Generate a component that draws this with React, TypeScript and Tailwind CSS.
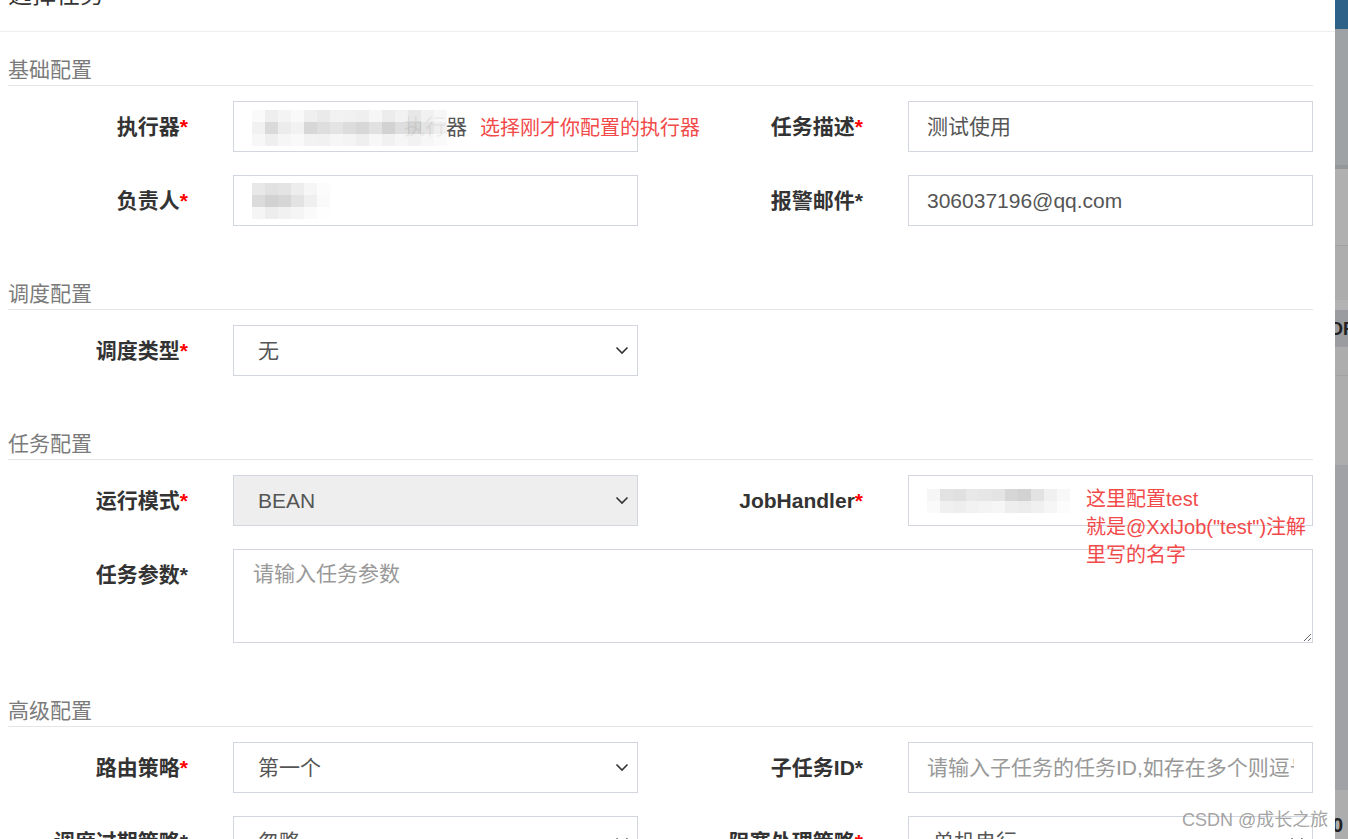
import type { ReactNode } from "react";

const FONT = "font-['Liberation_Sans','Noto_Sans_CJK_SC',sans-serif]";

function Chevron() {
  return (
    <svg width="14" height="9" viewBox="0 0 14 9" className="shrink-0">
      <polyline points="1.5,1.5 7,7 12.5,1.5" fill="none" stroke="#333" strokeWidth="1.6" />
    </svg>
  );
}

// pixelated blur used to hide private values
function Mosaic({ rows }: { rows: number[][] }) {
  return (
    <div className="flex flex-col">
      {rows.map((r, i) => (
        <div key={i} className="flex">
          {r.map((g, j) => (
            <div
              key={j}
              className="h-[12px] w-[13px]"
              style={{ backgroundColor: `rgb(${g},${g},${g})` }}
            />
          ))}
        </div>
      ))}
    </div>
  );
}

function Label({ text, red = true, w, top }: { text: string; red?: boolean; w: string; top?: boolean }) {
  return (
    <div
      className={`${w} shrink-0 text-right text-[21px] font-bold text-[#333] ${top ? "self-start pt-[10px]" : ""}`}
    >
      {text}
      <span className={red ? "text-[#ff0000]" : "text-[#333]"}>*</span>
    </div>
  );
}

function Box({ children, gray, select }: { children?: ReactNode; gray?: boolean; select?: boolean }) {
  return (
    <div
      className={`flex h-[51px] w-[405px] shrink-0 items-center justify-between overflow-hidden border border-[#d2d6de] ${
        gray ? "bg-[#eeeeee]" : "bg-white"
      } ${select ? "pl-[24px] pr-[8px]" : "px-[18px]"} text-[21px] text-[#555]`}
    >
      <div className="flex min-w-0 flex-1 items-center overflow-hidden">{children}</div>
      {select && <Chevron />}
    </div>
  );
}

function Row({ children }: { children: ReactNode }) {
  return <div className="relative flex items-center">{children}</div>;
}

function Section({ title, children }: { title: string; children: ReactNode }) {
  return (
    <div>
      <div className="flex h-[54px] items-end border-b border-[#e5e5e5] pb-[2px] text-[21px] leading-[26px] text-[#7b7b7b]">
        {title}
      </div>
      <div className="flex flex-col gap-[23px] pt-[15px] pb-[30px]">{children}</div>
    </div>
  );
}

const L = "w-[180px]";
const R = "w-[225px]";

export default function App() {
  return (
    <div className={`flex h-[839px] w-[1348px] overflow-hidden bg-white ${FONT}`}>
      <div className="relative w-[1335px] shrink-0 bg-white">
        <div className="h-[32px] overflow-hidden border-b border-[#eeeeee]">
          <div className="-mt-[20px] pl-[8px] text-[24px] leading-[30px] text-[#333]">选择任务</div>
        </div>

        <div className="pl-[8px] pr-[22px]">
          <Section title="基础配置">
            <Row>
              <Label text="执行器" w={L} />
              <div className="ml-[45px]">
                <Box>
                  <div className="relative flex h-[49px] w-full items-center">
                    <span className="ml-[152px] whitespace-nowrap text-[#555]">
                      <span className="opacity-40">执行</span>器
                    </span>
                    <div className="absolute left-[0px] top-[8px] opacity-80">
                      <Mosaic
                        rows={[
                          [250, 235, 242, 248, 236, 230, 240, 238, 236, 244, 232, 240, 226, 238, 246],
                          [238, 210, 232, 240, 206, 214, 222, 212, 206, 218, 200, 214, 204, 222, 236],
                          [246, 236, 244, 248, 240, 238, 244, 242, 236, 246, 238, 244, 240, 246, 250],
                        ]}
                      />
                    </div>
                  </div>
                </Box>
              </div>
              <div className="absolute left-[472px] top-[12px] text-[20px] text-[#f24a4a]">
                选择刚才你配置的执行器
              </div>
              <Label text="任务描述" w={R} />
              <div className="ml-[45px]">
                <Box>
                  <span>测试使用</span>
                </Box>
              </div>
            </Row>
            <Row>
              <Label text="负责人" w={L} />
              <div className="ml-[45px]">
                <Box>
                  <div className="opacity-90">
                    <Mosaic
                      rows={[
                        [230, 222, 226, 236, 246, 252],
                        [216, 206, 210, 224, 238, 250],
                        [244, 236, 240, 244, 250, 254],
                      ]}
                    />
                  </div>
                </Box>
              </div>
              <Label text="报警邮件" red={false} w={R} />
              <div className="ml-[45px]">
                <Box>
                  <span>306037196@qq.com</span>
                </Box>
              </div>
            </Row>
          </Section>

          <Section title="调度配置">
            <Row>
              <Label text="调度类型" w={L} />
              <div className="ml-[45px]">
                <Box select>
                  <span>无</span>
                </Box>
              </div>
            </Row>
          </Section>

          <Section title="任务配置">
            <Row>
              <Label text="运行模式" w={L} />
              <div className="ml-[45px]">
                <Box select gray>
                  <span>BEAN</span>
                </Box>
              </div>
              <Label text="JobHandler" w={R} />
              <div className="ml-[45px]">
                <Box>
                  <Mosaic
                    rows={[
                      [246, 226, 224, 232, 230, 228, 214, 210, 226, 240, 248],
                      [250, 240, 238, 242, 244, 246, 238, 236, 240, 246, 252],
                    ]}
                  />
                </Box>
              </div>
            </Row>
            <Row>
              <Label text="任务参数" red={false} w={L} top />
              <textarea
                placeholder="请输入任务参数"
                className="ml-[45px] h-[94px] w-[1080px] self-start border border-[#d2d6de] px-[19px] py-[8px] text-[21px] text-[#555] outline-none placeholder:text-[#999]"
              />
              <div className="absolute left-[1078px] top-[-64px] text-[20px] leading-[28px] text-[#f24a4a]">
                <div>这里配置test</div>
                <div>就是@XxlJob("test")注解</div>
                <div>里写的名字</div>
              </div>
            </Row>
          </Section>

          <Section title="高级配置">
            <Row>
              <Label text="路由策略" w={L} />
              <div className="ml-[45px]">
                <Box select>
                  <span>第一个</span>
                </Box>
              </div>
              <Label text="子任务ID" red={false} w={R} />
              <div className="ml-[45px]">
                <Box>
                  <span className="whitespace-nowrap text-[#999]">请输入子任务的任务ID,如存在多个则逗号分隔</span>
                </Box>
              </div>
            </Row>
            <Row>
              <Label text="调度过期策略" red={false} w={L} />
              <div className="ml-[45px]">
                <Box select>
                  <span>忽略</span>
                </Box>
              </div>
              <Label text="阻塞处理策略" w={R} />
              <div className="ml-[45px]">
                <Box select>
                  <span>单机串行</span>
                </Box>
              </div>
            </Row>
          </Section>
        </div>

        <div className="absolute left-[1182px] top-[807px] text-[18px] text-[#8c8c8c]/80">CSDN @成长之旅</div>
      </div>

      <div className="flex w-[13px] shrink-0 flex-col overflow-hidden">
        <div className="h-[29px] bg-[#2d6187]" />
        <div className="h-[136px] bg-[#9fa2a5]" />
        <div className="h-[4px] bg-[#959698]" />
        <div className="h-[76px] bg-[#b0b0b0]" />
        <div className="h-[1px] bg-[#a2a2a2]" />
        <div className="h-[54px] bg-[#adadad]" />
        <div className="h-[10px] bg-[#b3b3b3]" />
        <div className="flex h-[37px] items-center bg-[#9a9c9f] text-[18px] font-bold leading-none text-[#222]">
          <span className="-ml-[6px]">OF</span>
        </div>
        <div className="h-[28px] bg-[#adadad]" />
        <div className="h-[1px] bg-[#a3a3a3]" />
        <div className="h-[89px] bg-[#adadad]" />
        <div className="h-[325px] bg-[#a0a2a5]" />
        <div className="flex h-[49px] items-end bg-[#adadad] pb-[4px] text-[20px] font-bold leading-none text-[#222]">
          <span className="-ml-[3px]">0</span>
        </div>
      </div>
    </div>
  );
}
